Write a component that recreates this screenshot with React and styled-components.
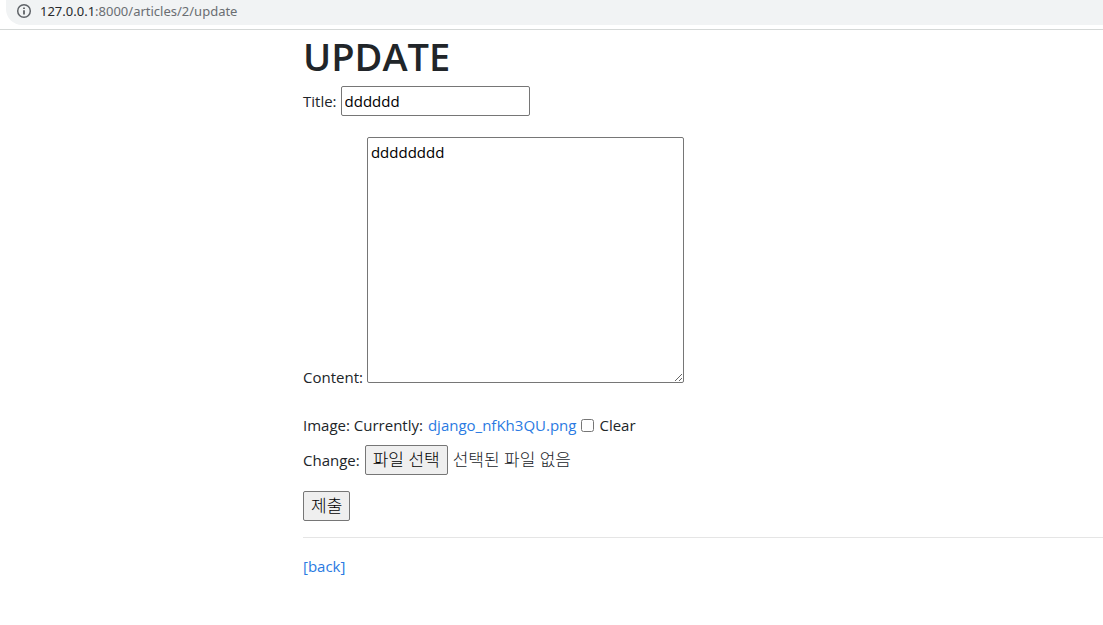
import React, { useRef } from 'react';
import styled, { createGlobalStyle } from 'styled-components';

const GlobalStyle = createGlobalStyle`
  *, *::before, *::after { box-sizing: border-box; }
  body {
    margin: 0;
    background: #fff;
    color: #212529;
    font-family: "Open Sans", "Noto Sans CJK KR", sans-serif;
    font-size: 15px;
    line-height: 24px;
  }
`;

const AddressBar = styled.header`
  height: 30px;
  padding: 0 0 5px 6px;
  border-bottom: 1px solid #d5d8d7;
`;

const Omnibox = styled.div`
  display: flex;
  align-items: flex-start;
  gap: 8px;
  height: 25px;
  padding: 2px 0 0 10px;
  background: #f1f3f4;
  border-radius: 0 0 0 16px;
  color: #6a6e72;
  font-family: "Noto Sans", sans-serif;
  font-size: 13px;
  line-height: 18px;

  svg { flex: none; margin-top: 1px; }
`;

const Host = styled.span`
  color: #27292c;
`;

const Page = styled.main`
  padding: 2px 0 32px 303px;
`;

const Heading = styled.h1`
  margin: 0 0 6px;
  font-size: 38px;
  font-weight: 600;
  line-height: 48px;
`;

const Row = styled.div`
  display: flex;
  align-items: ${(p) => p.$align || 'center'};
  gap: ${(p) => p.$gap || 4}px;
  margin-bottom: ${(p) => p.$after || 0}px;
`;

const TextInput = styled.input`
  width: 189px;
  height: 30px;
  padding: 1px 3px;
  border: 1px solid #767676;
  border-radius: 2px;
  background: #fff;
  color: #000;
  font: inherit;
`;

const TextArea = styled.textarea`
  width: 317px;
  height: 246px;
  padding: 2px 3px;
  border: 1px solid #767676;
  border-radius: 2px;
  background: #fff;
  color: #000;
  font: inherit;
  resize: both;
`;

const ContentLabel = styled.label`
  line-height: 12px;
`;

const Link = styled.a`
  color: #2a7ae2;
  text-decoration: none;
`;

const Checkbox = styled.input`
  width: 13px;
  height: 13px;
  margin: 0;
`;

const Button = styled.button`
  height: 30px;
  padding: 0 7px;
  border: 1px solid #767676;
  border-radius: 2px;
  background: #efefef;
  color: #000;
  font: inherit;
  font-size: 17px;
  font-weight: 300;
  white-space: nowrap;
`;

const FileStatus = styled.span`
  font-size: 17px;
  font-weight: 300;
`;

const Rule = styled.hr`
  margin: 0 0 16px;
  border: 0;
  border-top: 1px solid #e5e5e5;
`;

function InfoIcon() {
  return (
    <svg width="16" height="16" viewBox="0 0 16 16" fill="none" aria-hidden="true">
      <circle cx="8" cy="8" r="6.3" stroke="#5f6368" strokeWidth="1.5" />
      <path d="M8 7.2v4.2M8 4.4v1.6" stroke="#4b4f53" strokeWidth="1.6" />
    </svg>
  );
}

export default function App() {
  const fileRef = useRef(null);
  return (
    <>
      <GlobalStyle />
      <AddressBar>
        <Omnibox>
          <InfoIcon />
          <span><Host>127.0.0.1</Host>:8000/articles/2/update</span>
        </Omnibox>
      </AddressBar>
      <Page>
        <Heading>UPDATE</Heading>
        <form onSubmit={(e) => e.preventDefault()}>
          <Row $after={21}>
            <label htmlFor="title">Title:</label>
            <TextInput id="title" type="text" defaultValue="dddddd" />
          </Row>
          <Row $align="flex-end" $after={30}>
            <ContentLabel htmlFor="content">Content:</ContentLabel>
            <TextArea id="content" defaultValue="dddddddd" spellCheck={false} />
          </Row>
          <Row $gap={5} $after={8}>
            <span>Image: Currently:</span>
            <Link href="#image">django_nfKh3QU.png</Link>
            <Checkbox id="clear" type="checkbox" />
            <label htmlFor="clear">Clear</label>
          </Row>
          <Row $gap={5} $after={16}>
            <label htmlFor="image">Change:</label>
            <input id="image" ref={fileRef} type="file" hidden />
            <Button type="button" onClick={() => fileRef.current.click()}>파일 선택</Button>
            <FileStatus>선택된 파일 없음</FileStatus>
          </Row>
          <Row $after={16}>
            <Button type="submit">제출</Button>
          </Row>
        </form>
        <Rule />
        <Link href="#back">[back]</Link>
      </Page>
    </>
  );
}
